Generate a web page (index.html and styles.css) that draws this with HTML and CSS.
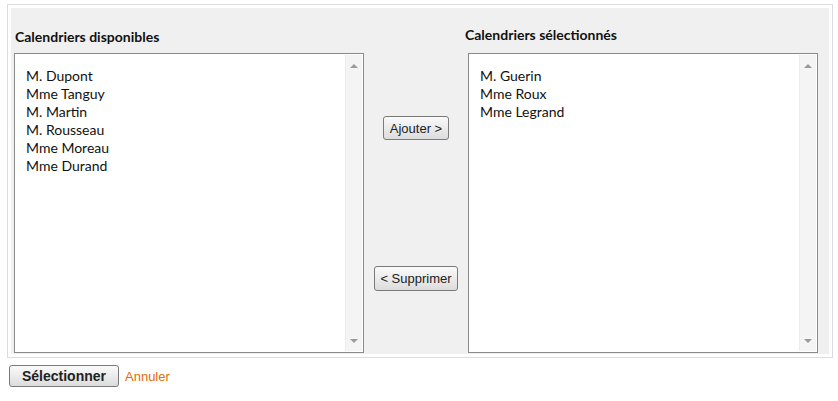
FILE: index.html
```html
<!DOCTYPE html>
<html lang="fr">
<head>
  <meta charset="UTF-8" />
  <title>Sélection des calendriers</title>
  <link rel="stylesheet" href="styles.css">
</head>
<body>

  <div class="picker">
    <div class="picker-inner">

      <div class="column column-left">
        <h3>Calendriers disponibles</h3>
        <div class="listbox">
          <ul>
            <li>M. Dupont</li>
            <li>Mme Tanguy</li>
            <li>M. Martin</li>
            <li>M. Rousseau</li>
            <li>Mme Moreau</li>
            <li>Mme Durand</li>
          </ul>
          <div class="scrollbar">
            <span class="arrow up"></span>
            <span class="arrow down"></span>
          </div>
        </div>
      </div>

      <div class="actions">
        <button class="btn btn-add">Ajouter &gt;</button>
        <button class="btn btn-remove">&lt; Supprimer</button>
      </div>

      <div class="column column-right">
        <h3>Calendriers sélectionnés</h3>
        <div class="listbox">
          <ul>
            <li>M. Guerin</li>
            <li>Mme Roux</li>
            <li>Mme Legrand</li>
          </ul>
          <div class="scrollbar">
            <span class="arrow up"></span>
            <span class="arrow down"></span>
          </div>
        </div>
      </div>

    </div>
  </div>

  <div class="form-footer">
    <button class="btn btn-submit">Sélectionner</button>
    <a href="#" class="cancel">Annuler</a>
  </div>

</body>
</html>
```

FILE: styles.css
```css
* {
  margin: 0;
  padding: 0;
  box-sizing: border-box;
}

body {
  font-family: 'Lato', 'Liberation Sans', sans-serif;
  background: #fff;
  color: #111;
  padding: 4px 5px 0 7px;
}

.picker {
  width: 826px;
  border: 1px solid #dcdcdc;
  padding: 3px;
}

.picker-inner {
  background: #f0f0f0;
  display: flex;
  height: 346px;
  padding: 0 9px 0 3px;
}

.column {
  width: 350px;
  display: flex;
  flex-direction: column;
}

.column h3 {
  font-size: 14px;
  font-weight: bold;
  color: #111;
  height: 45px;
  line-height: 16px;
}

.column-left h3 {
  padding: 21px 0 0 1px;
}

.column-right h3 {
  padding: 19px 0 0 0;
  margin-left: -3px;
}

.listbox {
  height: 300px;
  background: #fff;
  border: 1px solid #8a8a8a;
  display: flex;
}

.listbox ul {
  flex: 1;
  list-style: none;
  padding: 13px 0 0 11px;
  font-size: 14px;
  line-height: 18px;
  color: #111;
}

.scrollbar {
  width: 17px;
  margin: 1px 1px 1px 0;
  background: #f4f4f4;
  border-left: 1px solid #ececec;
  display: flex;
  flex-direction: column;
  justify-content: space-between;
  align-items: center;
  padding: 9px 0 8px;
}

.arrow {
  width: 0;
  height: 0;
  border-left: 4px solid transparent;
  border-right: 4px solid transparent;
}

.arrow.up {
  border-bottom: 4px solid #9a9a9a;
}

.arrow.down {
  border-top: 4px solid #9a9a9a;
}

.actions {
  width: 104px;
  display: flex;
  flex-direction: column;
  align-items: center;
}

.btn {
  font-family: 'Liberation Sans', Arial, sans-serif;
  font-size: 13px;
  color: #222;
  background: linear-gradient(#fafafa, #dcdcdc);
  border: 1px solid #7a7a7a;
  border-radius: 3px;
  cursor: pointer;
}

.btn-add {
  margin-top: 108px;
  width: 66px;
  height: 24px;
}

.btn-remove {
  margin-top: 126px;
  width: 84px;
  height: 25px;
}

.form-footer {
  display: flex;
  align-items: center;
  gap: 6px;
  margin: 7px 0 0 2px;
}

.btn-submit {
  width: 110px;
  height: 22px;
  font-size: 14px;
  font-weight: bold;
}

.cancel {
  font-family: 'Liberation Sans', Arial, sans-serif;
  font-size: 13px;
  color: #e46c0a;
  text-decoration: none;
}
```
